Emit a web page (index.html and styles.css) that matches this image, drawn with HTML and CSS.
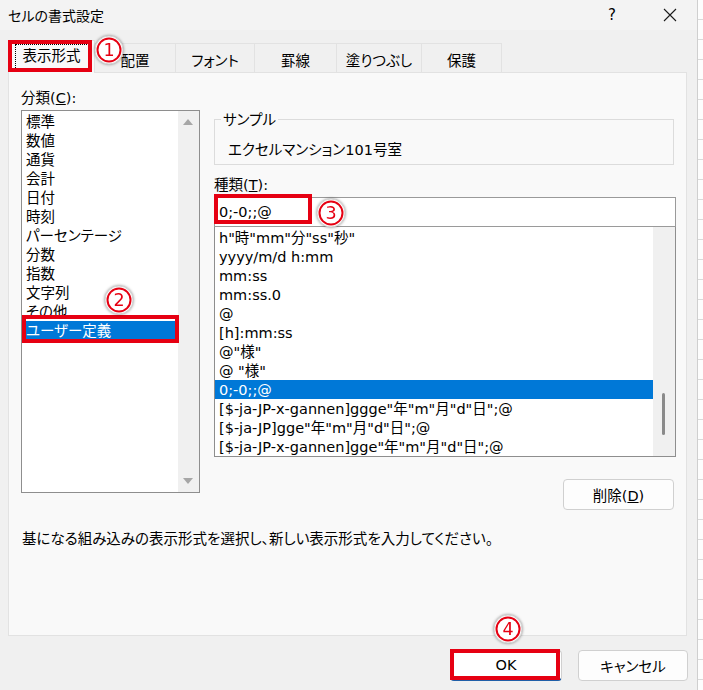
FILE: index.html
```html
<!DOCTYPE html>
<html lang="ja">
<head>
    <meta charset="UTF-8">
    <title>セルの書式設定</title>
    <link rel="stylesheet" href="styles.css">
</head>
<body>
<div class="screen">
  <div class="dialog">
    <div class="titlebar">
      <span class="title">セルの書式設定</span>
      <span class="help">?</span>
      <span class="close">
        <svg width="14" height="14" viewBox="0 0 14 14"><path d="M1 1 L13 13 M13 1 L1 13" stroke="#1a1a1a" stroke-width="1.1" fill="none"/></svg>
      </span>
    </div>

    <div class="tabs">
      <div class="tab active">
        <span class="focus">表示形式</span>
        <i class="mark mark-tab"></i>
        <svg class="num num-1" viewBox="0 0 30 30"><circle cx="15" cy="15" r="14" class="disc"/><circle cx="15" cy="15" r="11.5" class="ring"/><text x="15" y="21.3">1</text></svg>
      </div>
      <div class="tab">配置</div>
      <div class="tab">フォント</div>
      <div class="tab">罫線</div>
      <div class="tab">塗りつぶし</div>
      <div class="tab">保護</div>
    </div>

    <div class="panel">
      <div class="cols">
        <div class="left">
          <div class="label">分類(<u>C</u>):</div>
          <div class="listbox cat">
            <ul class="items">
              <li>標準</li>
              <li>数値</li>
              <li>通貨</li>
              <li>会計</li>
              <li>日付</li>
              <li>時刻</li>
              <li>パーセンテージ</li>
              <li>分数</li>
              <li>指数</li>
              <li>文字列</li>
              <li>その他</li>
              <li class="sel">ユーザー定義</li>
            </ul>
            <div class="vscroll">
              <span class="arr up"></span>
              <span class="arr down"></span>
            </div>
            <i class="mark mark-cat"></i>
            <svg class="num num-2" viewBox="0 0 30 30"><circle cx="15" cy="15" r="14" class="disc"/><circle cx="15" cy="15" r="11.5" class="ring"/><text x="15" y="21.3">2</text></svg>
          </div>
        </div>

        <div class="right">
          <div class="group">
            <span class="group-title">サンプル</span>
            <div class="sample">エクセルマンション101号室</div>
          </div>
          <div class="label type-label">種類(<u>T</u>):</div>
          <div class="input">
            0;-0;;@
            <i class="mark mark-input"></i>
            <svg class="num num-3" viewBox="0 0 30 30"><circle cx="15" cy="15" r="14" class="disc"/><circle cx="15" cy="15" r="11.5" class="ring"/><text x="15" y="21.3">3</text></svg>
          </div>
          <div class="listbox fmt">
            <ul class="items">
              <li>h"時"mm"分"ss"秒"</li>
              <li>yyyy/m/d h:mm</li>
              <li>mm:ss</li>
              <li>mm:ss.0</li>
              <li>@</li>
              <li>[h]:mm:ss</li>
              <li>@"様"</li>
              <li>@ "様"</li>
              <li class="sel">0;-0;;@</li>
              <li>[$-ja-JP-x-gannen]ggge"年"m"月"d"日";@</li>
              <li>[$-ja-JP]gge"年"m"月"d"日";@</li>
              <li>[$-ja-JP-x-gannen]gge"年"m"月"d"日";@</li>
            </ul>
            <div class="vscroll thin"><span class="thumb"></span></div>
          </div>
          <button class="btn delete">削除(<u>D</u>)</button>
        </div>
      </div>
      <p class="desc">基になる組み込みの表示形式を選択し、新しい表示形式を入力してください。</p>
    </div>

    <div class="buttons">
      <button class="btn ok">OK
        <i class="mark mark-ok"></i>
        <svg class="num num-4" viewBox="0 0 30 30"><circle cx="15" cy="15" r="14" class="disc"/><circle cx="15" cy="15" r="11.5" class="ring"/><text x="15" y="21.3">4</text></svg>
      </button>
      <button class="btn cancel">キャンセル</button>
    </div>
  </div>
  <div class="sheet"></div>
</div>
</body>
</html>
```

FILE: styles.css
```css
* { box-sizing: border-box; }

html, body { margin: 0; padding: 0; }

body {
    width: 703px;
    height: 690px;
    overflow: hidden;
    background: #fff;
    color: #000;
    font-family: "DejaVu Sans", "Noto Sans CJK JP", sans-serif;
    font-size: 14.5px;
    font-feature-settings: "palt";
}

.screen { display: flex; height: 690px; }

.dialog {
    width: 698px;
    flex: none;
    display: flex;
    flex-direction: column;
    background: #f0f0f0;
    border-right: 1px solid #cfcfcf;
}

.sheet {
    flex: 1;
    background: #fdfdfd repeating-linear-gradient(to bottom, transparent 0 19px, #dadada 19px 20px);
}

/* title bar */
.titlebar {
    height: 30px;
    display: flex;
    align-items: center;
    padding: 0 4px 0 8px;
    background: #f3f3f3;
}
.title { flex: 1; font-size: 14px; }
.help { width: 46px; text-align: center; margin-right: 12px; font-size: 15px; }
.close { width: 46px; display: flex; justify-content: center; }

/* tabs */
.tabs {
    height: 42px;
    display: flex;
    align-items: flex-end;
    padding-left: 8px;
}
.tab {
    height: 29px;
    padding-top: 3px;
    display: flex;
    justify-content: center;
    align-items: center;
    border-top: 1px solid #e2e2e2;
    border-right: 1px solid #e2e2e2;
    background: #f0f0f0;
}
.tab:nth-child(1) { width: 87px; }
.tab:nth-child(2) { width: 81px; }
.tab:nth-child(3) { width: 79px; }
.tab:nth-child(4) { width: 82px; }
.tab:nth-child(5) { width: 85px; }
.tab:nth-child(6) { width: 80px; }

.tab.active {
    position: relative;
    z-index: 2;
    height: 33px;
    margin-bottom: -1px;
    padding-top: 0;
    border-left: 1px solid #e2e2e2;
    background: #f9f9f9;
}
.focus {
    border: 1px dotted #000;
    padding: 2px 7px 3px 7px;
    line-height: 19px;
}

/* panel */
.panel {
    margin-left: 8px;
    width: 679px;
    height: 564px;
    padding: 15px 10px 0 12px;
    background: #f9f9f9;
    border: 1px solid #e2e2e2;
}
.cols {
    display: grid;
    grid-template-columns: 179px 462px;
    column-gap: 14px;
}
.label { height: 20px; line-height: 20px; }
.left .label { margin-bottom: 2px; }

.listbox {
    position: relative;
    display: flex;
    background: #fff;
    border: 1px solid #8e8e8e;
}
.listbox.cat { height: 383px; }
.listbox.fmt { height: 231px; margin-top: -1px; }

.items {
    list-style: none;
    margin: 0;
    padding: 0;
    flex: 1;
    overflow: hidden;
}
.items li {
    height: 19px;
    line-height: 21px;
    padding-left: 4px;
    white-space: nowrap;
}
.cat .items { padding-top: 1px; }
.fmt .items { padding-top: 1px; }
.items li.sel { background: #0078d7; color: #fff; }

.vscroll {
    position: relative;
    width: 21px;
    flex: none;
    background: #f0f0f0;
}
.vscroll.thin { width: 22px; }
.arr {
    position: absolute;
    left: 5px;
    width: 0;
    height: 0;
    border-left: 5px solid transparent;
    border-right: 5px solid transparent;
}
.arr.up { top: 8px; border-bottom: 6px solid #a6a6a6; }
.arr.down { bottom: 8px; border-top: 6px solid #a6a6a6; }
.thumb {
    position: absolute;
    left: 9px;
    top: 166px;
    width: 3px;
    height: 42px;
    border-radius: 2px;
    background: #8a8a8a;
}

.right { display: flex; flex-direction: column; }

.group {
    position: relative;
    width: 460px;
    height: 46px;
    margin-top: 31px;
    padding: 21px 0 0 13px;
    border: 1px solid #dcdcdc;
}
.group-title {
    position: absolute;
    top: -9px;
    left: 6px;
    padding: 0 2px;
    line-height: 18px;
    background: #f9f9f9;
}
.sample { line-height: 19px; }

.type-label { margin-top: 10px; margin-bottom: 2px; height: 20px; }

.input {
    position: relative;
    z-index: 1;
    height: 30px;
    line-height: 28px;
    padding-left: 4px;
    background: #fff;
    border: 1px solid #9a9a9a;
}

.btn {
    position: relative;
    height: 31px;
    font: inherit;
    color: #000;
    background: #fdfdfd;
    border: 1px solid #d0d0d0;
    border-radius: 4px;
    padding: 0;
}
.delete {
    width: 111px;
    margin-top: 22px;
    margin-right: 2px;
    align-self: flex-end;
}

.desc {
    margin: 19px 0 0 1px;
    line-height: 20px;
}

/* bottom buttons */
.buttons {
    display: flex;
    justify-content: flex-end;
    gap: 16px;
    margin-top: 14px;
    padding-right: 9px;
}
.ok {
    width: 112px;
    background: #fff;
    border-bottom: 2px solid #1f5fa8;
}
.cancel { width: 110px; }

/* annotations */
.mark {
    position: absolute;
    z-index: 3;
    border: 4px solid #e60012;
}
.mark-tab { left: -1px; top: -1px; width: 84px; height: 32px; }
.mark-cat { left: 0; top: 204px; width: 157px; height: 28px; }
.mark-input { left: -1px; top: -4px; width: 98px; height: 30px; }
.mark-ok { left: -1px; top: -2px; width: 110px; height: 31px; }

.num {
    position: absolute;
    z-index: 4;
    width: 30px;
    height: 30px;
    overflow: visible;
    filter: drop-shadow(0 0 1.5px rgba(0, 0, 0, 0.45));
}
.num .disc { fill: #fff; stroke: #d2d2d2; stroke-width: 1; }
.num .ring { fill: none; stroke: #e60012; stroke-width: 2; }
.num text {
    fill: #e60012;
    font-family: "DejaVu Sans", sans-serif;
    font-size: 17.5px;
    text-anchor: middle;
}
.num-1 { left: 85px; top: -6px; }
.num-2 { left: 82px; top: 174px; }
.num-3 { left: 101px; top: 0; }
.num-4 { left: 42px; top: -37px; }
```
